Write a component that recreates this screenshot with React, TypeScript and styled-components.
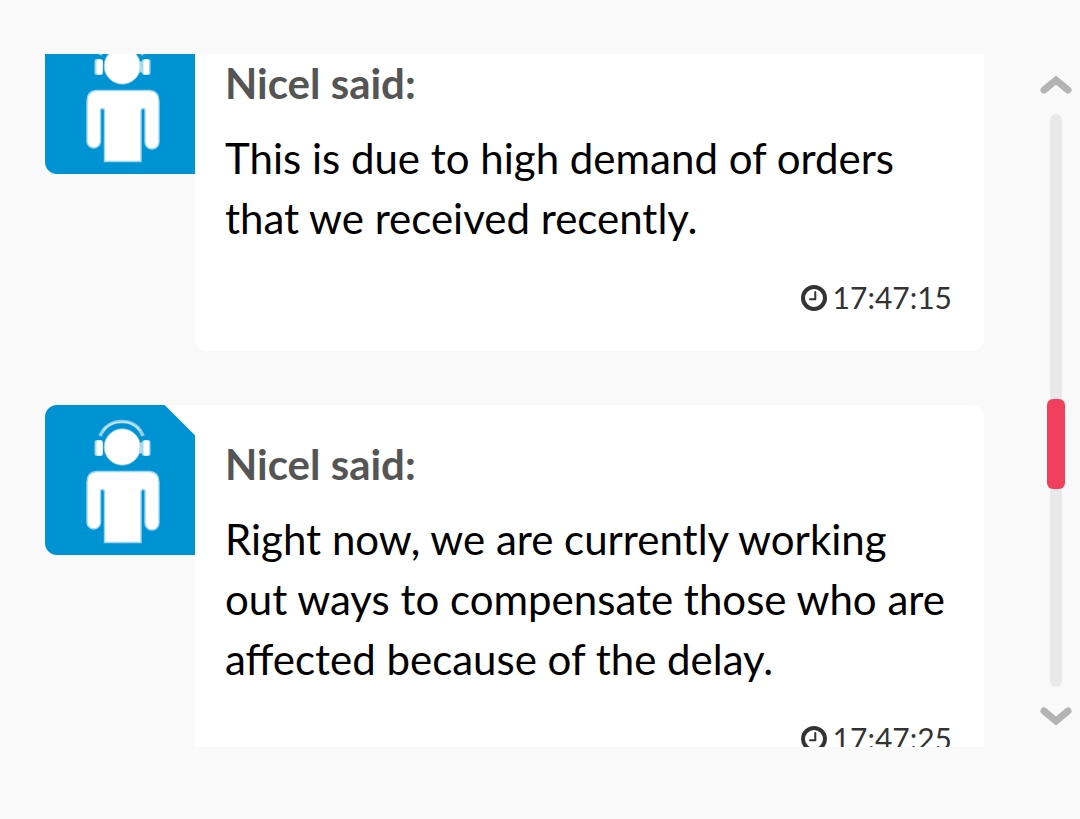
import React from 'react';
import styled, { createGlobalStyle } from 'styled-components';

const GlobalStyle = createGlobalStyle`
  * { box-sizing: border-box; }
  body {
    margin: 0;
    background: #f9f9f9;
    font-family: Lato, 'Open Sans', sans-serif;
  }
`;

const Page = styled.main`
  display: flex;
  gap: 56px;
  height: 100vh;
  padding: 54px 8px 72px 45px;
`;

const Viewport = styled.section`
  flex: 1;
  min-width: 0;
  overflow: hidden;
`;

const MessageList = styled.ul`
  display: flex;
  flex-direction: column;
  gap: 54px;
  margin: -30px 0 0;
  padding: 0;
  list-style: none;
`;

const Message = styled.li`
  display: flex;
  align-items: flex-start;
`;

const Avatar = styled.div`
  flex: none;
  width: 150px;
  height: 150px;
  border-radius: 12px 0 0 12px;
  background: linear-gradient(225deg, #fff 21px, #0093d3 22px);

  svg { display: block; }
`;

const Bubble = styled.article`
  flex: 1;
  min-width: 0;
  padding: 29px 32px 31px 30px;
  border-radius: 0 12px 12px 12px;
  background: #fff;
`;

const Name = styled.h2`
  margin: 0 0 15px;
  color: #555;
  font-size: 42px;
  font-weight: 700;
  line-height: 60px;
`;

const Body = styled.p`
  margin: 0;
  color: #000;
  font-size: 42px;
  line-height: 60px;
`;

const Time = styled.time`
  display: flex;
  align-items: center;
  justify-content: flex-end;
  gap: 6px;
  margin-top: 27px;
  color: #333;
  font-size: 30px;
  line-height: 45px;
`;

const ScrollBar = styled.div`
  display: flex;
  flex: none;
  flex-direction: column;
  align-items: center;
  gap: 18px;
  width: 32px;
  padding: 20px 0;
`;

const ArrowButton = styled.button`
  display: block;
  flex: none;
  width: 32px;
  height: 22px;
  padding: 0;
  border: 0;
  background: none;
  cursor: pointer;

  svg { display: block; }
`;

const Track = styled.div`
  display: flex;
  flex: 1;
  flex-direction: column;
  align-items: center;
  width: 12px;
  border-radius: 6px;
  background: #e8e8e8;
`;

const BeforeThumb = styled.div`
  flex: 285 0 0;
`;

const AfterThumb = styled.div`
  flex: 198 0 0;
`;

const Thumb = styled.div`
  flex: none;
  width: 18px;
  height: 90px;
  border-radius: 6px;
  background: #f1405d;
`;

function AgentIcon() {
  return (
    <svg width="150" height="150" viewBox="0 0 150 150" role="img" aria-label="Agent" fill="#fff">
      <path d="M55 31 C60 20 69 16.500 77 16.500 C86 16.500 94 21 98 31" fill="none" stroke="#8fcfeb" strokeWidth="3.600" />
      <path d="M58 26 C63 19 70 17 77 17 C85 17 91 20 95 26" fill="none" stroke="#d3ecf7" strokeWidth="1.200" />
      <circle cx="77.300" cy="42" r="18.200" stroke="#7fc8e8" strokeWidth="0.800" />
      <rect x="49.500" y="35" width="8.500" height="16" rx="2.500" fill="#a9daf0" />
      <rect x="51.500" y="35.500" width="6" height="15" rx="2" />
      <rect x="94.500" y="37.500" width="5" height="11" fill="#a9daf0" />
      <rect x="97" y="35" width="8.500" height="16" rx="2.500" fill="#a9daf0" />
      <rect x="98.500" y="35.500" width="5.500" height="15" rx="2" />
      <path d="M51 66.500 H105 Q114 67.500 114 77 V118 A7 7 0 0 1 100 118 V86 Q100 84.500 98 84.500 Q96 84.500 96 87 V137.500 H59.500 V87 Q59.500 84.500 57.500 84.500 Q55.500 84.500 55.500 86 V118 A6.800 6.800 0 0 1 42 118 V77 Q42 67.500 51 66.500 Z" stroke="#9fd5ed" strokeWidth="1.400" />
    </svg>
  );
}

function ClockIcon() {
  return (
    <svg width="26" height="26" viewBox="0 0 26 26" fill="none" stroke="currentColor" aria-hidden="true">
      <circle cx="13" cy="13" r="11" strokeWidth="4" />
      <path d="M14.300 7 V14.200 H9" strokeWidth="2" strokeLinecap="round" strokeLinejoin="round" />
    </svg>
  );
}

function Chevron({ up = false }: { up?: boolean }) {
  return (
    <svg width="32" height="22" viewBox="0 0 32 22" fill="none" stroke="#b3b3b3" strokeWidth="7" strokeLinecap="round" aria-hidden="true">
      <path d={up ? 'M4 16 L16 6 L28 16' : 'M4 6 L16 16 L28 6'} />
    </svg>
  );
}

const messages = [
  { text: 'This is due to high demand of orders that we received recently.', time: '17:47:15' },
  { text: 'Right now, we are currently working out ways to compensate those who are affected because of the delay.', time: '17:47:25' },
];

export default function App() {
  return (
    <>
      <GlobalStyle />
      <Page>
        <Viewport>
          <MessageList>
            {messages.map((message) => (
              <Message key={message.time}>
                <Avatar><AgentIcon /></Avatar>
                <Bubble>
                  <Name>Nicel said:</Name>
                  <Body>{message.text}</Body>
                  <Time><ClockIcon />{message.time}</Time>
                </Bubble>
              </Message>
            ))}
          </MessageList>
        </Viewport>
        <ScrollBar>
          <ArrowButton type="button" aria-label="Scroll up"><Chevron up /></ArrowButton>
          <Track>
            <BeforeThumb />
            <Thumb />
            <AfterThumb />
          </Track>
          <ArrowButton type="button" aria-label="Scroll down"><Chevron /></ArrowButton>
        </ScrollBar>
      </Page>
    </>
  );
}
